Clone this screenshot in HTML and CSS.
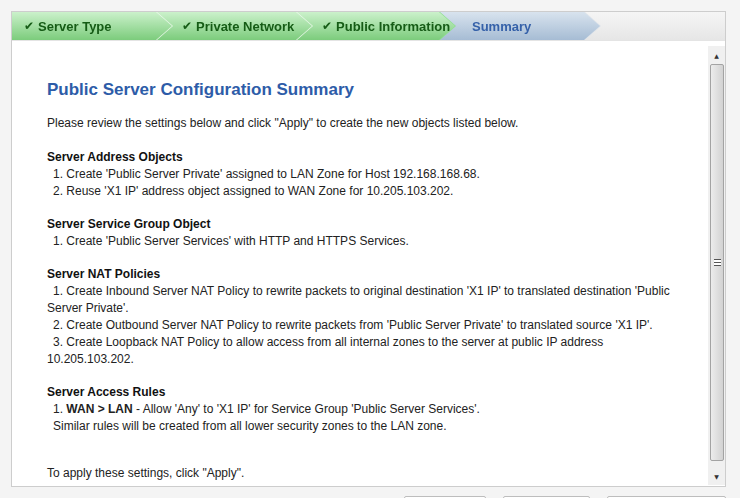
FILE: index.html
```html
<!DOCTYPE html>
<html lang="en">
<head>
    <meta charset="UTF-8">
    <title>Public Server Wizard - Summary</title>
    <link rel="stylesheet" href="styles.css">
</head>
<body>
    <div class="wizard">
        <div class="steps">
            <div class="step step-1 done"><div class="step-bg"><span class="check">✔</span>Server Type</div></div>
            <div class="step step-2 done"><div class="step-bg"><span class="check">✔</span>Private Network</div></div>
            <div class="step step-3 done"><div class="step-bg"><span class="check">✔</span>Public Information</div></div>
            <div class="step step-4 current"><div class="step-bg">Summary</div></div>
        </div>

        <div class="pane">
            <div class="summary">
                <h1>Public Server Configuration Summary</h1>
                <p class="intro">Please review the settings below and click "Apply" to create the new objects listed below.</p>

                <div class="section">
                    <h2>Server Address Objects</h2>
                    <div class="item">1. Create 'Public Server Private' assigned to LAN Zone for Host 192.168.168.68.</div>
                    <div class="item">2. Reuse 'X1 IP' address object assigned to WAN Zone for 10.205.103.202.</div>
                </div>

                <div class="section">
                    <h2>Server Service Group Object</h2>
                    <div class="item">1. Create 'Public Server Services' with HTTP and HTTPS Services.</div>
                </div>

                <div class="section">
                    <h2>Server NAT Policies</h2>
                    <div class="item">1. Create Inbound Server NAT Policy to rewrite packets to original destination 'X1 IP' to translated destination 'Public Server Private'.</div>
                    <div class="item">2. Create Outbound Server NAT Policy to rewrite packets from 'Public Server Private' to translated source 'X1 IP'.</div>
                    <div class="item">3. Create Loopback NAT Policy to allow access from all internal zones to the server at public IP address 10.205.103.202.</div>
                </div>

                <div class="section">
                    <h2>Server Access Rules</h2>
                    <div class="item">1. <b>WAN &gt; LAN</b> - Allow 'Any' to 'X1 IP' for Service Group 'Public Server Services'.</div>
                    <div class="item">Similar rules will be created from all lower security zones to the LAN zone.</div>
                </div>

                <p class="apply-note">To apply these settings, click "Apply".</p>
            </div>

            <div class="scrollbar">
                <div class="scroll-btn">&#9650;</div>
                <div class="scroll-track">
                    <div class="scroll-thumb"><span class="grip"></span></div>
                </div>
                <div class="scroll-btn">&#9660;</div>
            </div>
        </div>
    </div>

    <!-- botoes do rodape: so a borda de cima aparece na janela -->
    <div class="footer">
        <button class="btn-back" aria-label="Back"></button>
        <button class="btn-apply" aria-label="Apply"></button>
        <button class="btn-cancel" aria-label="Cancel"></button>
    </div>
</body>
</html>
```

FILE: styles.css
```css
* {
    margin: 0;
    padding: 0;
    box-sizing: border-box;
}

body {
    font-family: 'Liberation Sans', Arial, sans-serif;
    font-size: 12px;
    color: #222;
    background-color: #f4f4f4;
    overflow: hidden;
}

.wizard {
    margin: 11px 14px 0 11px;
    height: 476px;
    border: 1px solid #cdcdcd;
    background-color: #fff;
    display: flex;
    flex-direction: column;
}

/* barra de passos */
.steps {
    display: flex;
    height: 29px;
    flex-shrink: 0;
    background: linear-gradient(#f5f5f5, #e6e6e6);
    border-bottom: 1px solid #e4e4e4;
}

.step {
    position: relative;
    height: 28px;
    margin-left: -16px;
    filter: drop-shadow(1px 0 0 #eaf8ea);
}

.step-1 { width: 160px; margin-left: 0; z-index: 4; }
.step-2 { width: 156px; z-index: 3; }
.step-3 { width: 159px; z-index: 2; filter: drop-shadow(1px 0 0 #8fe08f); }
.step-4 { width: 161px; z-index: 1; filter: drop-shadow(1px 0 0 #dfe4ea); }

.step-bg {
    height: 100%;
    display: flex;
    align-items: center;
    padding-left: 26px;
    font-size: 13px;
    font-weight: bold;
    white-space: nowrap;
    clip-path: polygon(0 0, calc(100% - 16px) 0, 100% 50%, calc(100% - 16px) 100%, 0 100%);
}

.step-1 .step-bg { padding-left: 12px; }
.step-4 .step-bg { padding-left: 33px; }

.step.done .step-bg {
    background: linear-gradient(#cbf1cb, #7ccc7c);
    color: #165c16;
}

.step.current .step-bg {
    background: linear-gradient(#d8e3ee, #a6bcd4);
    color: #3561a9;
}

.check {
    font-family: 'DejaVu Sans', sans-serif;
    font-size: 12px;
    margin-right: 4px;
}

/* conteudo */
.pane {
    flex: 1;
    display: flex;
    min-height: 0;
}

.summary {
    flex: 1;
    padding: 39px 20px 0 35px;
    line-height: 17px;
}

h1 {
    font-size: 17px;
    line-height: 20px;
    color: #2d5ca8;
    margin-bottom: 15px;
}

.intro {
    margin-bottom: 17px;
}

.section {
    margin-bottom: 16px;
}

h2 {
    font-size: 12px;
    color: #111;
}

.item {
    text-indent: 6px;
}

.apply-note {
    margin-top: 30px;
}

/* barra de rolagem */
.scrollbar {
    width: 17px;
    margin-top: 5px;
    margin-bottom: 1px;
    display: flex;
    flex-direction: column;
    background-color: #f0f0f0;
}

.scroll-btn {
    height: 18px;
    display: flex;
    align-items: center;
    justify-content: center;
    font-family: 'DejaVu Sans', sans-serif;
    font-size: 6px;
    color: #333;
}

.scroll-track {
    flex: 1;
    display: flex;
    padding: 0 1px 6px 2px;
}

.scroll-thumb {
    flex: 1;
    border: 1px solid #a3a3a3;
    border-radius: 2px;
    background: linear-gradient(to right, #ececec, #d2d2d2);
    display: flex;
    align-items: center;
    justify-content: center;
}

.grip {
    width: 7px;
    height: 7px;
    border-top: 1px solid #555;
    border-bottom: 1px solid #555;
    background: linear-gradient(#fff 0, #fff 2px, #555 2px, #555 3px, #fff 3px);
}

/* rodape */
.footer {
    display: flex;
    justify-content: flex-end;
    gap: 17px;
    margin: 9px 14px 0 0;
}

button {
    height: 24px;
    border: 1px solid #bdbdbd;
    border-radius: 2px;
    background: linear-gradient(#fff, #e6e6e6);
}

.btn-back { width: 82px; }
.btn-apply { width: 87px; }
.btn-cancel { width: 119px; }
```
